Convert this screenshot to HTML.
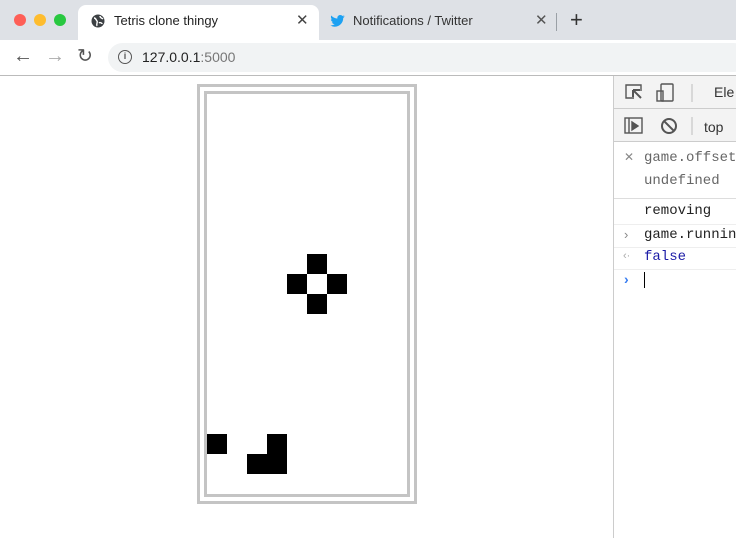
<!DOCTYPE html>
<html><head><style>
*{margin:0;padding:0;box-sizing:border-box}
body{width:736px;height:538px;overflow:hidden;background:#fff;font-family:"Liberation Sans",sans-serif;position:relative}
.a{position:absolute}
.mono{font-family:"Liberation Mono",monospace;font-size:14px}
.b{position:absolute;background:#000;width:20px;height:20px}
</style></head><body>
<div class="a" style="left:0;top:0;width:736px;height:40px;background:#dee1e6"></div>
<div class="a" style="left:14px;top:14px;width:12px;height:12px;border-radius:50%;background:#fe5f57"></div>
<div class="a" style="left:34px;top:14px;width:12px;height:12px;border-radius:50%;background:#febc2e"></div>
<div class="a" style="left:54px;top:14px;width:12px;height:12px;border-radius:50%;background:#28c840"></div>
<div class="a" style="left:78px;top:5px;width:241px;height:36px;background:#fff;border-radius:8px 8px 0 0"></div>
<svg class="a" style="left:91px;top:14px" width="14" height="14" viewBox="0 0 14 14"><circle cx="7" cy="7" r="6.5" fill="#3c4043"/><path d="M3 4c2 0 2 2 3 3s-1 3 0 5M9 2c0 2 2 2 3 3M8 9c1-1 3 0 3 1" stroke="#fff" stroke-width="1.4" fill="none"/></svg>
<div class="a" style="left:114px;top:13px;font-size:13px;color:#222">Tetris clone thingy</div>
<div class="a" style="left:296px;top:11px;font-size:15px;color:#444">✕</div>
<svg class="a" style="left:330px;top:15px" width="15" height="12" viewBox="0 0 24 20"><path d="M24 2.3c-.9.4-1.8.7-2.8.8 1-.6 1.8-1.6 2.2-2.7-1 .6-2 1-3.1 1.2C19.3.6 18 0 16.6 0c-2.7 0-4.9 2.2-4.9 4.9 0 .4 0 .8.1 1.1C7.7 5.8 4.1 3.9 1.7.9c-.4.7-.7 1.6-.7 2.5 0 1.7.9 3.2 2.2 4.1-.8 0-1.6-.2-2.2-.6v.1c0 2.4 1.7 4.4 3.9 4.8-.4.1-.8.2-1.3.2-.3 0-.6 0-.9-.1.6 2 2.4 3.4 4.6 3.4-1.7 1.3-3.8 2.1-6.1 2.1-.4 0-.8 0-1.2-.1 2.2 1.4 4.8 2.2 7.5 2.2 9.1 0 14-7.5 14-14v-.6c1-.7 1.8-1.6 2.5-2.5z" fill="#1da1f2"/></svg>
<div class="a" style="left:353px;top:13px;font-size:13px;color:#333">Notifications / Twitter</div>
<div class="a" style="left:535px;top:11px;font-size:15px;color:#555">✕</div>
<div class="a" style="left:556px;top:13px;width:1px;height:18px;background:#9aa0a6"></div>
<div class="a" style="left:570px;top:7px;font-size:22px;color:#333">+</div>
<div class="a" style="left:0;top:40px;width:736px;height:36px;background:#fff"></div>
<div class="a" style="left:13px;top:45px;font-size:20px;color:#555">←</div>
<div class="a" style="left:45px;top:45px;font-size:20px;color:#aaa">→</div>
<div class="a" style="left:77px;top:45px;font-size:19px;color:#555">↻</div>
<div class="a" style="left:108px;top:43px;width:640px;height:29px;background:#f1f3f4;border-radius:15px"></div>
<div class="a" style="left:118px;top:50px;width:14px;height:14px;border:1.5px solid #555;border-radius:50%;font-size:9px;text-align:center;line-height:11px;color:#555;font-weight:bold">i</div>
<div class="a" style="left:142px;top:49px;font-size:14px;color:#222">127.0.0.1<span style="color:#777">:5000</span></div>
<div class="a" style="left:0;top:75px;width:736px;height:1px;background:#bbb"></div>
<!-- board -->
<div class="a" style="left:197px;top:84px;width:220px;height:420px;border:3px solid #c4c4c4"></div>
<div class="a" style="left:204px;top:91px;width:206px;height:406px;border:3px solid #c4c4c4"></div>
<div class="b" style="left:307px;top:254px"></div>
<div class="b" style="left:287px;top:274px"></div>
<div class="b" style="left:327px;top:274px"></div>
<div class="b" style="left:307px;top:294px"></div>
<div class="b" style="left:207px;top:434px"></div>
<div class="b" style="left:267px;top:434px;height:40px"></div>
<div class="b" style="left:247px;top:454px"></div>
<!-- devtools -->
<div class="a" style="left:613px;top:76px;width:123px;height:462px;background:#fff;border-left:1px solid #ccc"></div>
<div class="a" style="left:614px;top:76px;width:122px;height:66px;background:#f3f3f3"></div>
<div class="a" style="left:614px;top:108px;width:122px;height:1px;background:#ccc"></div>
<div class="a" style="left:614px;top:141px;width:122px;height:1px;background:#ccc"></div>
<svg class="a" style="left:624px;top:82px" width="70" height="56" viewBox="0 0 70 56" fill="none" stroke="#555" stroke-width="1.4"><path d="M10 16H2V3h15v6"/><path d="M9 8l8 8m-8-8v7m0-7h7" stroke-width="2"/><rect x="37" y="2" width="12" height="17" rx="1"/><rect x="33" y="9" width="6" height="10"/><line x1="68" y1="2" x2="68" y2="20" stroke="#ccc"/><rect x="1" y="36" width="17" height="15"/><line x1="5" y1="36" x2="5" y2="51"/><path d="M8 40l6 4-6 4z" fill="#555"/><circle cx="45" cy="44" r="7" stroke-width="2"/><line x1="40" y1="39" x2="50" y2="49" stroke-width="2"/><line x1="68" y1="35" x2="68" y2="53" stroke="#ccc"/></svg>
<div class="a" style="left:714px;top:84px;font-size:14px;color:#333">Ele</div>
<div class="a" style="left:704px;top:119px;font-size:14px;color:#333">top</div>
<div class="a" style="left:614px;top:142px;width:122px;height:56px;background:#fff"></div>
<div class="a" style="left:624px;top:150px;font-size:12px;color:#888">✕</div>
<div class="a mono" style="left:644px;top:150px;color:#666">game.offset</div>
<div class="a mono" style="left:644px;top:173px;color:#666">undefined</div>
<div class="a" style="left:614px;top:198px;width:122px;height:1px;background:#ddd"></div>
<div class="a mono" style="left:644px;top:203px;color:#222">removing</div>
<div class="a" style="left:614px;top:224px;width:122px;height:1px;background:#eee"></div>
<div class="a" style="left:624px;top:227px;font-size:13px;color:#888">›</div>
<div class="a mono" style="left:644px;top:227px;color:#222">game.running</div>
<div class="a" style="left:614px;top:247px;width:122px;height:1px;background:#eee"></div>
<div class="a" style="left:623px;top:250px;font-size:11px;color:#aaa">‹·</div>
<div class="a mono" style="left:644px;top:249px;color:#1a1aa6">false</div>
<div class="a" style="left:614px;top:269px;width:122px;height:1px;background:#eee"></div>
<div class="a" style="left:624px;top:271px;font-size:14px;color:#367cf1;font-weight:bold">›</div>
<div class="a" style="left:644px;top:272px;width:1px;height:16px;background:#000"></div>
</body></html>
